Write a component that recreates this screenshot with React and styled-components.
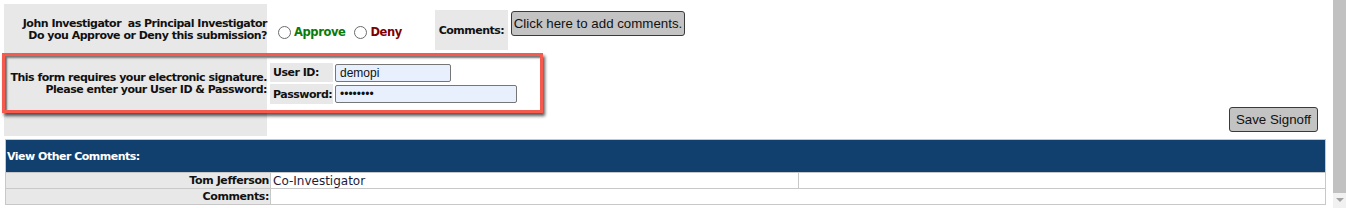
import React from "react";
import styled, { createGlobalStyle } from "styled-components";

const GlobalStyle = createGlobalStyle`
    html, body {
        margin: 0;
        padding: 0;
        background: #ffffff;
        overflow: hidden;
    }
    body {
        font-family: "DejaVu Sans", Verdana, sans-serif;
        font-size: 11px;
        color: #111111;
    }
`;

const Page = styled.div`
    display: flex;
    width: 1346px;
    height: 208px;
    overflow: hidden;
`;

const Content = styled.div`
    position: relative;
    flex: 1;
    padding: 4px 0 0 4px;
`;

const Scrollbar = styled.div`
    width: 13px;
    display: flex;
    flex-direction: column;
    background: #f1f1f1;
`;

const Thumb = styled.div`
    height: 193px;
    background: #c1c1c1;
`;

const ArrowDown = styled.div`
    margin: 5px auto 0;
    width: 0;
    height: 0;
    border-left: 4px solid transparent;
    border-right: 4px solid transparent;
    border-top: 4px solid #a3a3a3;
`;

const SignoffGrid = styled.div`
    display: grid;
    grid-template-columns: 263px 1fr;
    grid-template-rows: 52px 78px;
    row-gap: 2px;
`;

const LabelCell = styled.div`
    background: #e8e8e8;
    font-weight: bold;
    letter-spacing: -0.5px;
    text-align: right;
    white-space: nowrap;
    line-height: 12px;
    padding: ${({ $top }) => $top || "0"} 0 0 0;
    display: flex;
    flex-direction: column;
    justify-content: ${({ $center }) => ($center ? "center" : "flex-start")};
    align-items: flex-end;
`;

const DecisionRow = styled.div`
    display: flex;
    align-items: flex-start;
`;

const RadioGroup = styled.div`
    width: 168px;
    height: 52px;
    display: flex;
    align-items: center;
    padding-left: 11px;
    box-sizing: border-box;
`;

const RadioLabel = styled.label`
    display: flex;
    align-items: center;
    font-weight: bold;
    font-size: 11.5px;
    letter-spacing: -0.4px;
    color: ${({ $tone }) => $tone};
    margin-right: 9px;
    padding-top: 4px;
`;

const Radio = styled.span`
    width: 11px;
    height: 11px;
    border: 1px solid #6b6b6b;
    border-radius: 50%;
    background: #fff;
    margin-right: 3px;
`;

const CommentsLabel = styled.div`
    margin-top: 6px;
    width: 73px;
    height: 40px;
    background: #e8e8e8;
    font-weight: bold;
    letter-spacing: -0.5px;
    display: flex;
    align-items: center;
    justify-content: center;
`;

const GreyButton = styled.button`
    font-family: "Liberation Sans", Arial, sans-serif;
    font-size: 13.3px;
    color: #111;
    background: #c3c3c3;
    border: 1px solid #3a3a3a;
    border-radius: 3px;
    height: 25px;
    white-space: nowrap;
    padding: 0;
    width: ${({ $w }) => $w};
    cursor: pointer;
`;

const ButtonCell = styled.div`
    margin: 7px 0 0 3px;
`;

const SignatureSide = styled.div`
    display: flex;
    flex-direction: column;
    padding: 5px 15px 0 3px;
`;

const Fields = styled.div`
    display: grid;
    grid-template-columns: 63px auto;
    column-gap: 2px;
    row-gap: 2px;
    align-items: center;
    justify-items: start;
`;

const FieldLabel = styled.div`
    background: #e8e8e8;
    font-weight: bold;
    letter-spacing: -0.5px;
    height: ${({ $h }) => $h};
    width: 100%;
    display: flex;
    align-items: center;
    padding-left: 3px;
    box-sizing: border-box;
`;

const TextInput = styled.input`
    box-sizing: border-box;
    width: ${({ $w }) => $w};
    height: 18px;
    border: 1px solid #767676;
    border-radius: 2px;
    background: #e8f0fe;
    font-family: "Liberation Sans", Arial, sans-serif;
    font-size: 12px;
    padding: 0 4px;
    color: #111;
    outline: none;
`;

const SaveRow = styled.div`
    display: flex;
    justify-content: flex-end;
    margin-top: 3px;
`;

const Highlight = styled.div`
    position: absolute;
    left: 2px;
    top: 53px;
    width: 541px;
    height: 60px;
    box-sizing: border-box;
    border: 3px solid #f45a4d;
    box-shadow: 2px 3px 3px rgba(0, 0, 0, 0.65), inset 2px 2px 2px rgba(0, 0, 0, 0.55);
    pointer-events: none;
`;

const CommentsTable = styled.table`
    margin: 3px 0 0 1px;
    width: 1321px;
    border-collapse: collapse;
    border: 1px solid #c8c8c8;
`;

const HeaderCell = styled.th`
    background: #113f6e;
    color: #ffffff;
    font-weight: bold;
    letter-spacing: -0.5px;
    text-align: left;
    height: 32px;
    padding: 0 1px;
    border: 1px solid #c8c8c8;
`;

const NameCell = styled.td`
    background: #e8e8e8;
    font-weight: bold;
    letter-spacing: -0.4px;
    text-align: right;
    width: 262px;
    height: 15px;
    padding: 0 1px;
    border: 1px solid #c8c8c8;
`;

const ValueCell = styled.td`
    font-size: 12px;
    color: #1c1c3a;
    width: ${({ $w }) => $w || "auto"};
    padding: 0 2px;
    border: 1px solid #c8c8c8;
`;

export default function App() {
    return (
        <Page>
            <GlobalStyle />
            <Content>
                <SignoffGrid>
                    <LabelCell $center>
                        <span>John Investigator&nbsp; as Principal Investigator</span>
                        <span>Do you Approve or Deny this submission?</span>
                    </LabelCell>
                    <DecisionRow>
                        <RadioGroup>
                            <RadioLabel $tone="#0a7a0a">
                                <Radio />
                                Approve
                            </RadioLabel>
                            <RadioLabel $tone="#800000">
                                <Radio />
                                Deny
                            </RadioLabel>
                        </RadioGroup>
                        <CommentsLabel>Comments:</CommentsLabel>
                        <ButtonCell>
                            <GreyButton $w="174px">Click here to add comments.</GreyButton>
                        </ButtonCell>
                    </DecisionRow>

                    <LabelCell $top="14px">
                        <span>This form requires your electronic signature.</span>
                        <span>Please enter your User ID &amp; Password:</span>
                    </LabelCell>
                    <SignatureSide>
                        <Fields>
                            <FieldLabel $h="19px">User ID:</FieldLabel>
                            <TextInput $w="116px" defaultValue="demopi" />
                            <FieldLabel $h="20px">Password:</FieldLabel>
                            <TextInput $w="182px" type="password" defaultValue="demopass" />
                        </Fields>
                        <SaveRow>
                            <GreyButton $w="89px">Save Signoff</GreyButton>
                        </SaveRow>
                    </SignatureSide>
                </SignoffGrid>

                <CommentsTable>
                    <thead>
                        <tr>
                            <HeaderCell colSpan={3}>View Other Comments:</HeaderCell>
                        </tr>
                    </thead>
                    <tbody>
                        <tr>
                            <NameCell>Tom Jefferson</NameCell>
                            <ValueCell $w="523px">Co-Investigator</ValueCell>
                            <ValueCell />
                        </tr>
                        <tr>
                            <NameCell>Comments:</NameCell>
                            <ValueCell colSpan={2} />
                        </tr>
                    </tbody>
                </CommentsTable>

                <Highlight />
            </Content>
            <Scrollbar>
                <Thumb />
                <ArrowDown />
            </Scrollbar>
        </Page>
    );
}
